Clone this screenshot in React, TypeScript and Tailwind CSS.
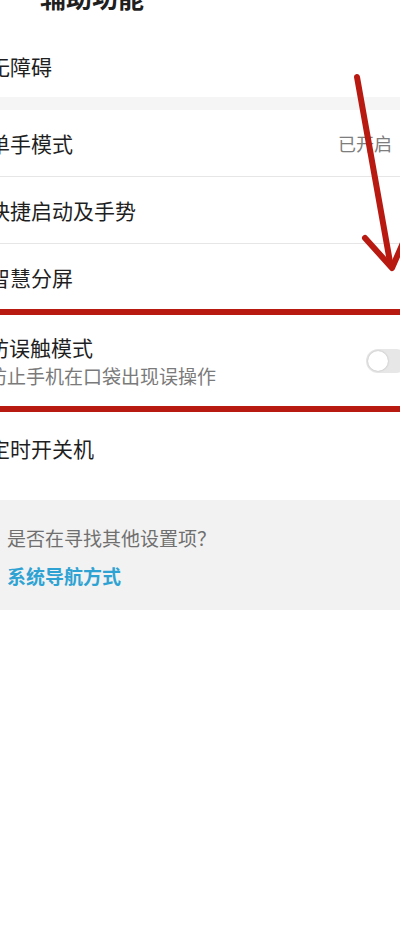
import { type ReactNode } from 'react';

const font = { fontFamily: '"Noto Sans CJK SC", "Noto Sans", sans-serif' };

function Row({ children, right, className = '' }: { children: ReactNode; right?: ReactNode; className?: string }) {
  return (
    <div className={`flex items-center pr-[8px] ${className}`}>
      <span className="-ml-[11px] text-[21px] leading-[26px] text-[#1f1f1f]">{children}</span>
      {right && <span className="ml-auto">{right}</span>}
    </div>
  );
}

function Divider() {
  return <div className="h-px bg-[#e6e6e6]" />;
}

export default function App() {
  return (
    <div className="relative h-[926px] w-[400px] overflow-hidden bg-white" style={font}>
      <div className="-mt-[20px] flex flex-col">
        {/* header, mostly scrolled off */}
        <div className="h-[36px] pl-[40px]">
          <div className="mt-[4px] text-[26px] font-bold leading-[26px] text-[#1f1f1f]">辅助功能</div>
        </div>

        <Row className="h-[81px] pt-[18px]">无障碍</Row>
        <div className="h-[13px] bg-[#f5f5f5]" />

        <Row className="h-[66px]" right={<span className="text-[18px] text-[#7d7d7d]">已开启</span>}>
          单手模式
        </Row>
        <Divider />
        <Row className="h-[66px]">快捷启动及手势</Row>
        <Divider />
        <Row className="h-[65px]">智慧分屏</Row>

        {/* highlighted row */}
        <div className="flex h-[103px] items-center border-y-[6px] border-[#b81a12]">
          <div className="-ml-[12px] flex flex-col gap-[4px]">
            <span className="text-[21px] leading-[26px] text-[#1f1f1f]">防误触模式</span>
            <span className="text-[19px] leading-[24px] text-[#7a7a7a]">防止手机在口袋出现误操作</span>
          </div>
          <div className="ml-auto -mr-[8px] flex h-[24px] w-[42px] items-center rounded-full bg-[#e7e7e7] px-[2px]">
            <div className="h-[20px] w-[20px] rounded-full bg-white shadow-[0_0_2px_rgba(0,0,0,0.25)]" />
          </div>
        </div>

        <Row className="h-[88px] !items-start pt-[23px]">定时开关机</Row>

        <div className="flex h-[110px] flex-col bg-[#f2f2f2] px-[7px] pt-[26px]">
          <span className="text-[19px] leading-[24px] text-[#6f6f6f]">是否在寻找其他设置项？</span>
          <span className="mt-[14px] text-[19px] font-bold leading-[24px] text-[#2ea3d3]">系统导航方式</span>
        </div>
      </div>

      {/* annotation arrow */}
      <svg className="pointer-events-none absolute left-0 top-0" width="400" height="926" viewBox="0 0 400 926">
        <line x1="357" y1="77" x2="390" y2="262" stroke="#b81a12" strokeWidth="6" strokeLinecap="round" />
        <polyline
          points="365,238 392,268 406,236"
          fill="none"
          stroke="#b81a12"
          strokeWidth="6"
          strokeLinecap="round"
          strokeLinejoin="round"
        />
      </svg>
    </div>
  );
}
